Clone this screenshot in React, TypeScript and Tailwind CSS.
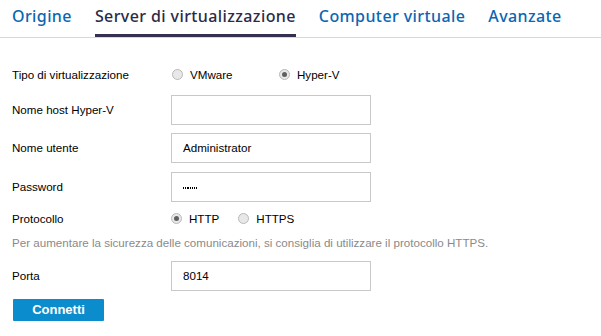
const tabs = ["Origine", "Server di virtualizzazione", "Computer virtuale", "Avanzate"];

function Radio({ checked, label, className = "" }: { checked?: boolean; label: string; className?: string }) {
    return (
        <label className={`flex items-center ${className}`}>
            <span className="w-[11px] h-[11px] rounded-full border border-[#b9b9b9] bg-[#e8e8e8] flex items-center justify-center">
                {checked && <span className="w-[5px] h-[5px] rounded-full bg-[#5f5f5f]"></span>}
            </span>
            <span className="ml-[7px] text-[11.6px] text-black">{label}</span>
        </label>
    );
}

function Field({ label, children }: { label: string; children?: React.ReactNode }) {
    return (
        <div className="flex items-center">
            <div className="w-[159px] text-[11.6px] text-black">{label}</div>
            <div className="w-[200px] h-[30px] border border-[#c8c8c8] bg-white flex items-center pl-[11px] text-[11.6px] text-black">
                {children}
            </div>
        </div>
    );
}

export default function App() {
    return (
        <div className="w-[601px] h-[336px] bg-white font-['Liberation_Sans',sans-serif] overflow-hidden">
            <div className="flex gap-[23px] pl-[12px] border-b border-[#d6d8de] h-[38px]">
                {tabs.map((tab, i) => (
                    <div
                        key={tab}
                        className={`h-[37px] pb-[2px] flex items-center border-b-[3px] font-['Noto_Sans',sans-serif] font-medium text-[16px] tracking-[0.4px] ${
                            i === 1 ? "border-[#35304f] text-[#2d2a48]" : "border-transparent text-[#0a66b2]"
                        }`}
                    >
                        {tab}
                    </div>
                ))}
            </div>

            <div className="pl-[12px] pt-[26px] flex flex-col">
                <div className="flex items-center h-[22px]">
                    <div className="w-[160px] text-[11.6px] text-black">Tipo di virtualizzazione</div>
                    <Radio label="VMware" className="w-[107px]" />
                    <Radio label="Hyper-V" checked />
                </div>

                <div className="mt-[9px]">
                    <Field label="Nome host Hyper-V" />
                </div>
                <div className="mt-[8px]">
                    <Field label="Nome utente">Administrator</Field>
                </div>
                <div className="mt-[9px]">
                    <Field label="Password">
                        <span className="flex gap-[1px] mt-[1px]">
                            {[0, 1, 2, 3, 4, 5, 6].map((d) => (
                                <span key={d} className="w-[1.2px] h-[2px] bg-black"></span>
                            ))}
                        </span>
                    </Field>
                </div>

                <div className="flex items-center h-[22px] mt-[6px]">
                    <div className="w-[159px] text-[11.6px] text-black">Protocollo</div>
                    <Radio label="HTTP" checked className="mr-[19px]" />
                    <Radio label="HTTPS" />
                </div>

                <p className="mt-[5px] h-[16px] text-[11.6px] leading-[16px] text-[#8a8a8a]">
                    Per aumentare la sicurezza delle comunicazioni, si consiglia di utilizzare il protocollo HTTPS.
                </p>

                <div className="mt-[10px]">
                    <Field label="Porta">8014</Field>
                </div>

                <button className="mt-[8px] ml-[1px] w-[91px] h-[22px] bg-[#0b8dcd] text-white text-[13px] font-bold rounded-[1px] flex items-center justify-center">
                    Connetti
                </button>
            </div>
        </div>
    );
}
